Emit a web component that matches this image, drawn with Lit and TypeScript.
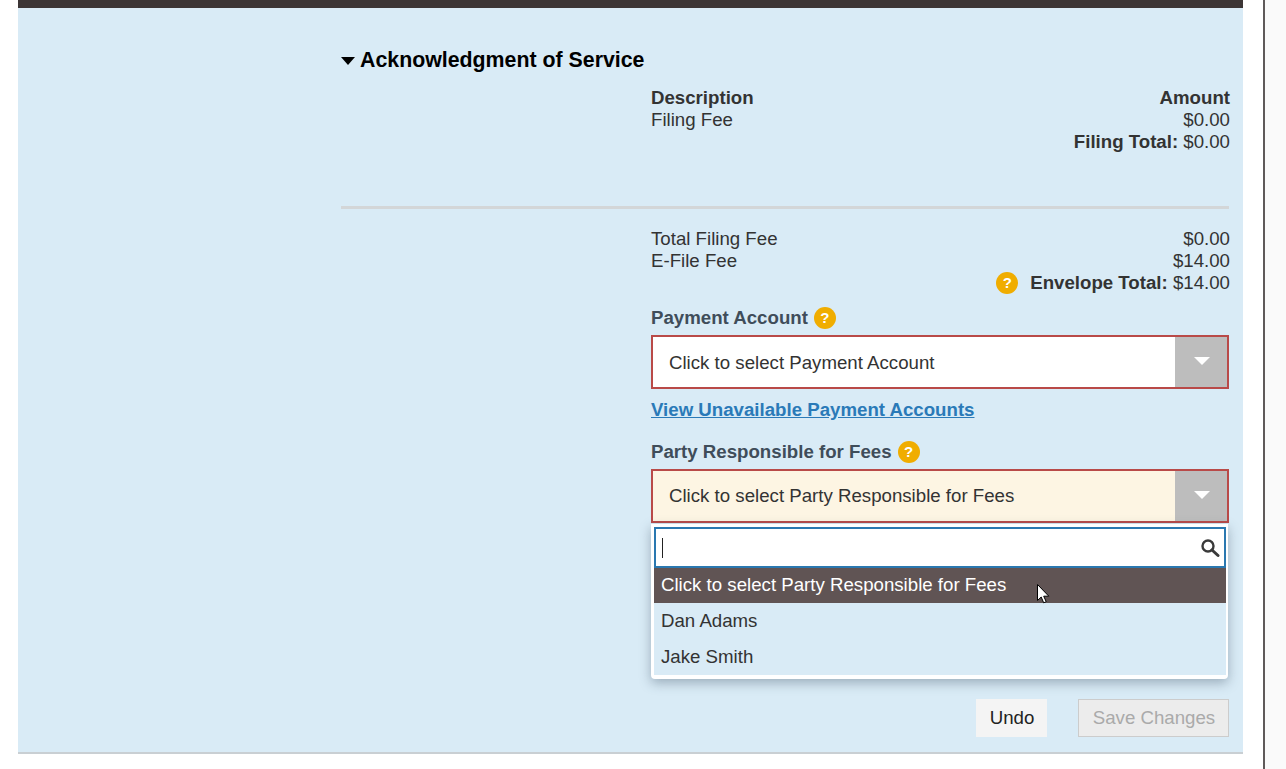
import { LitElement, html, css } from "lit";
import { customElement } from "lit/decorators.js";

const help = () => html`<span class="help">?</span>`;
const arrow = () => html`<span class="arrow"><span class="tri"></span></span>`;

@customElement("app-root")
export class AppRoot extends LitElement {
  static styles = css`
    :host { display: block; width: 1286px; height: 769px; overflow: hidden; background: #fff; font-family: "Liberation Sans", Arial, sans-serif; font-size: 18.667px; line-height: 22px; color: #333; }
    * { box-sizing: border-box; }
    .page { display: flex; height: 769px; padding-left: 18px; }
    .panel { width: 1225px; height: 754px; background: #d9ebf6; border-bottom: 2px solid #c9cfd3; }
    .topbar { height: 8px; background: #3c3535; }
    .side { width: 23px; margin-left: 20px; height: 769px; flex: 1; background: #fafafa; border-left: 2px solid #5f5a5a; }
    .inner { padding: 40px 14px 0 323px; }
    h2 { margin: 0; display: flex; align-items: center; height: 24px; font-size: 21.333px; line-height: 24px; color: #000; font-weight: bold; }
    .caret-down { width: 0; height: 0; border-left: 7.5px solid transparent; border-right: 7.5px solid transparent; border-top: 8px solid #000; margin: 2px 4px 0 0; flex: none; }
    h2 span + span { margin-left: 1px; }
    .col { margin-left: 310px; position: relative; }
    .fees { margin-top: 15px; }
    .row { display: flex; justify-content: space-between; height: 22px; margin-right: -1px; }
    .row.end { justify-content: flex-end; align-items: center; }
    b { font-weight: bold; }
    hr { border: 0; height: 3px; background: #d3d6d8; margin: 53px 0 19px; }
    .help { display: inline-flex; width: 22px; height: 22px; border-radius: 50%; background: #f0ad00; color: #fff; font-weight: bold; font-size: 15px; line-height: 22px; align-items: center; justify-content: center; flex: none; }
    .env { margin-right: 12px; }
    .label { display: flex; align-items: center; gap: 6px; height: 22px; font-weight: bold; color: #3f4d5a; }
    .l1 { margin-top: 13px; }
    .select { margin-top: 6px; display: flex; height: 54px; border: 2px solid #b94a48; background: #fff; align-items: stretch; }
    .select.open { background: #fdf5e3; }
    .sel-text { flex: 1; padding: 2px 0 0 16px; display: flex; align-items: center; }
    .open .sel-text { padding-top: 0; }
    .arrow { width: 52px; background: #bdbdbd; display: flex; align-items: center; justify-content: center; }
    .tri { width: 0; height: 0; border-left: 8px solid transparent; border-right: 8px solid transparent; border-top: 8px solid #fff; margin: -2px 0 0 2px; }
    a { display: block; margin-top: 10px; font-weight: bold; color: #2a7ab8; text-decoration: underline; }
    .l2 { margin-top: 20px; }
    .popup { position: absolute; left: 0; top: 296px; width: 577px; height: 155px; background: #fff; padding: 3px 2px 4px 3px; border-radius: 0 0 4px 4px; box-shadow: 0 4px 12px rgba(60, 80, 100, 0.4); }
    .search { height: 41px; border: 2px solid #2a78b0; background: #fff; display: flex; align-items: center; justify-content: space-between; padding: 0 4px 0 6px; }
    .text-caret { width: 1px; height: 20px; background: #222; }
    .items { background: #d9ebf6; }
    .item { height: 36px; display: flex; align-items: center; padding: 0 0 0 7px; }
    .item.hi { height: 35px; padding-bottom: 2px; background: #605454; color: #fff; }
    .actions { margin-top: 176px; display: flex; justify-content: flex-end; gap: 31px; }
    .btn { height: 38px; display: flex; align-items: center; justify-content: center; padding-left: 1px; }
    .undo { width: 71px; background: #f4f4f4; color: #222; }
    .save { width: 151px; background: #ececec; border: 1px solid #cccccc; color: #aaa; }
    .cursor { position: absolute; left: 1037px; top: 584px; }
  `;

  render() {
    return html`
      <div class="page">
        <div class="panel">
          <div class="topbar"></div>
          <div class="inner">
            <h2><span class="caret-down"></span><span>Acknowledgment of Service</span></h2>
            <div class="col fees">
              <div class="row"><b>Description</b><b>Amount</b></div>
              <div class="row"><span>Filing Fee</span><span>$0.00</span></div>
              <div class="row end"><span><b>Filing Total:</b> $0.00</span></div>
            </div>
            <hr />
            <div class="col">
              <div class="row"><span>Total Filing Fee</span><span>$0.00</span></div>
              <div class="row"><span>E-File Fee</span><span>$14.00</span></div>
              <div class="row end"><span class="help env">?</span><span><b>Envelope Total:</b> $14.00</span></div>
              <div class="label l1">Payment Account ${help()}</div>
              <div class="select"><span class="sel-text">Click to select Payment Account</span>${arrow()}</div>
              <a href="#">View Unavailable Payment Accounts</a>
              <div class="label l2">Party Responsible for Fees ${help()}</div>
              <div class="select open"><span class="sel-text">Click to select Party Responsible for Fees</span>${arrow()}</div>
              <div class="popup">
                <div class="search">
                  <span class="text-caret"></span>
                  <svg width="20" height="20" viewBox="0 0 20 20" fill="none" stroke="#3a3a3a">
                    <circle cx="8" cy="8" r="5.5" stroke-width="2.4"></circle>
                    <path d="M12 12l6 5.5" stroke-width="3" stroke-linecap="round"></path>
                  </svg>
                </div>
                <div class="items">
                  <div class="item hi">Click to select Party Responsible for Fees</div>
                  <div class="item">Dan Adams</div>
                  <div class="item">Jake Smith</div>
                </div>
              </div>
              <div class="actions">
                <div class="btn undo">Undo</div>
                <div class="btn save">Save Changes</div>
              </div>
            </div>
          </div>
        </div>
        <div class="side"></div>
      </div>
      <svg class="cursor" width="13" height="20" viewBox="0 0 13 20">
        <path d="M0.5 0.5V16.5L4.2 13L6.7 18.8L9.2 17.7L6.7 12.2H11.8Z" fill="#fff" stroke="#000" stroke-width="1"></path>
      </svg>
    `;
  }
}
